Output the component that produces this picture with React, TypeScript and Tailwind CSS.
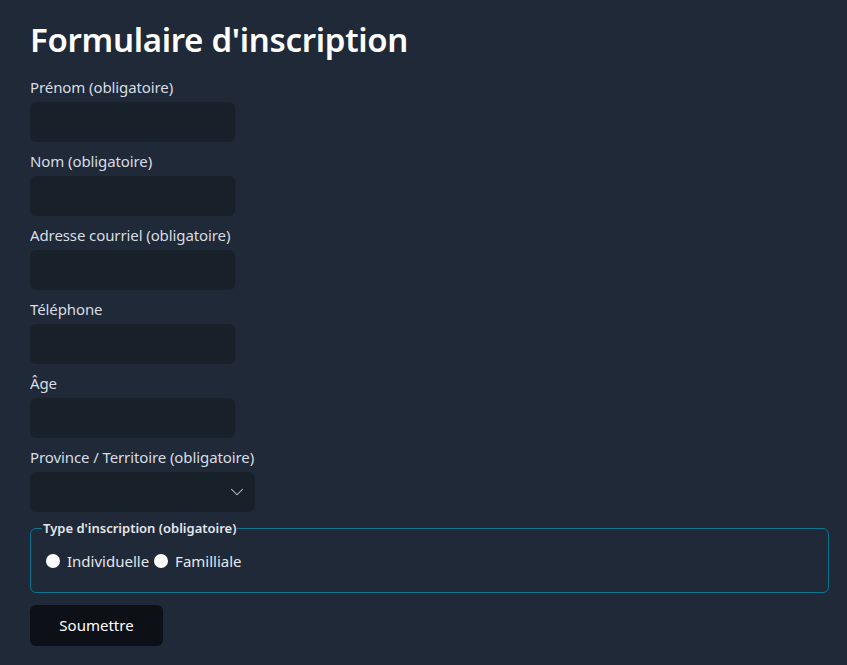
import { ChevronDown } from "lucide-react"

const fields = [
    { id: "prenom", label: "Prénom (obligatoire)", type: "text" },
    { id: "nom", label: "Nom (obligatoire)", type: "text" },
    { id: "courriel", label: "Adresse courriel (obligatoire)", type: "email" },
    { id: "telephone", label: "Téléphone", type: "tel" },
    { id: "age", label: "Âge", type: "number" },
]

export default function App() {
    return (
        <div className="min-h-[665px] bg-[#1f2937] pl-[30px] pr-[18px] pt-[18px] text-[#e5e7eb] font-['Segoe_UI','Noto_Sans',sans-serif]">
            <h1 className="text-[33px] leading-[44px] font-semibold text-white tracking-[-0.3px]">Formulaire d'inscription</h1>

            <form className="mt-[16px] flex flex-col">
                {fields.map(field => (
                    <div key={field.id} className="flex flex-col mb-[10px]">
                        <label htmlFor={field.id} className="text-[15px] leading-[18px] mb-[6px] text-[#d8dde4] tracking-[-0.1px]">{field.label}</label>
                        <input
                            id={field.id}
                            type={field.type}
                            className="w-[205px] h-[40px] rounded-md bg-[#18202a] outline-none px-3 text-white"
                        />
                    </div>
                ))}

                <div className="flex flex-col mb-[9px]">
                    <label htmlFor="province" className="text-[15px] leading-[18px] mb-[6px] text-[#d8dde4] tracking-[-0.1px]">Province / Territoire (obligatoire)</label>
                    <div className="relative w-[225px] h-[40px]">
                        <select id="province" className="appearance-none w-full h-full rounded-md bg-[#18202a] outline-none px-3 text-white">
                            <option value=""></option>
                        </select>
                        <ChevronDown className="absolute right-[7px] top-[9px] w-[22px] h-[22px] text-[#c9ced6] pointer-events-none" strokeWidth={1.1} />
                    </div>
                </div>

                <fieldset className="border border-[#0e7490] rounded-md px-[15px] pb-[19px] pt-[14px]">
                    <legend className="px-[1px] -ml-[4px] text-[13px] leading-[14px] font-semibold text-[#e5e7eb]">Type d'inscription (obligatoire)</legend>
                    <div className="flex items-center text-[15px] leading-[24px] text-[#e5e7eb]">
                        <label className="flex items-center gap-[7px] mr-[5px]">
                            <input type="radio" name="type" className="appearance-none w-[14px] h-[14px] rounded-full bg-white" />
                            Individuelle
                        </label>
                        <label className="flex items-center gap-[7px]">
                            <input type="radio" name="type" className="appearance-none w-[14px] h-[14px] rounded-full bg-white" />
                            Familliale
                        </label>
                    </div>
                </fieldset>

                <button type="submit" className="mt-[12px] w-[133px] h-[41px] rounded-md bg-[#0d1117] text-white text-[15px]">Soumettre</button>
            </form>
        </div>
    )
}
